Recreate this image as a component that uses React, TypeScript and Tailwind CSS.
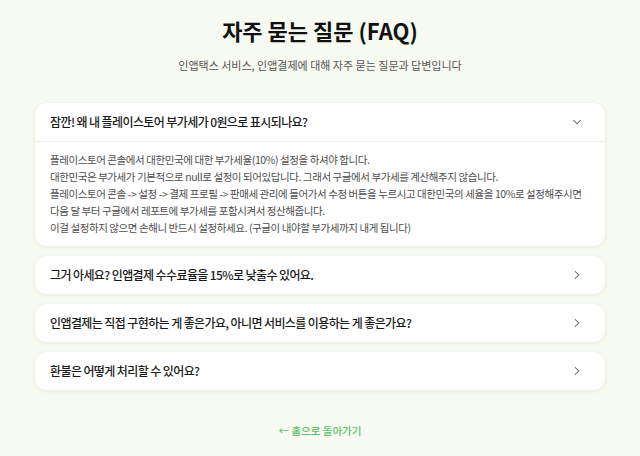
import { ChevronDown, ChevronRight } from 'lucide-react'

const faqs = [
  { q: '잠깐! 왜 내 플레이스토어 부가세가 0원으로 표시되나요?', open: true },
  { q: '그거 아세요? 인앱결제 수수료율을 15%로 낮출수 있어요.' },
  { q: '인앱결제는 직접 구현하는 게 좋은가요, 아니면 서비스를 이용하는 게 좋은가요?' },
  { q: '환불은 어떻게 처리할 수 있어요?' },
]

const answer = [
  '플레이스토어 콘솔에서 대한민국에 대한 부가세율(10%) 설정을 하셔야 합니다.',
  '대한민국은 부가세가 기본적으로 null로 설정이 되어있답니다. 그래서 구글에서 부가세를 계산해주지 않습니다.',
  '플레이스토어 콘솔 -> 설정 -> 결제 프로필 -> 판매세 관리에 들어가서 수정 버튼을 누르시고 대한민국의 세율을 10%로 설정해주시면',
  '다음 달 부터 구글에서 레포트에 부가세를 포함시켜서 정산해줍니다.',
  '이걸 설정하지 않으면 손해니 반드시 설정하세요. (구글이 내야할 부가세까지 내게 됩니다)',
]

export default function App() {
  return (
    <main
      className="min-h-screen bg-[#f7faf0] pt-[13px] pb-6"
      style={{ fontFamily: '"Noto Sans CJK KR", "Noto Sans", sans-serif' }}
    >
      <div className="w-[570px] mx-auto">
        <h1 className="text-center text-[22px] font-bold text-[#111] leading-[34px]">자주 묻는 질문 (FAQ)</h1>
        <p className="text-center text-[11px] text-[#555] mt-[9px] leading-[18px]">
          인앱택스 서비스, 인앱결제에 대해 자주 묻는 질문과 답변입니다
        </p>

        <div className="mt-[29px] flex flex-col gap-[10px]">
          {faqs.map(f => (
            <div key={f.q} className="bg-white rounded-xl shadow-[0_1px_4px_rgba(0,0,0,0.08)]">
              <div className="h-[38px] flex items-center justify-between pl-[15px] pr-[21px]">
                <span className="text-[12px] tracking-[-0.05em] font-medium text-[#1a1a1a]">{f.q}</span>
                {f.open ? (
                  <ChevronDown size={14} strokeWidth={1.8} className="text-[#5c616b]" />
                ) : (
                  <ChevronRight size={14} strokeWidth={1.8} className="text-[#5c616b]" />
                )}
              </div>
              {f.open && (
                <div className="border-t border-[#f0f0f0] px-[15px] pt-[9px] pb-[10px]">
                  {answer.map(line => (
                    <p key={line} className="text-[10.5px] tracking-[-0.04em] leading-[17px] text-[#4d4d4d] whitespace-nowrap">{line}</p>
                  ))}
                </div>
              )}
            </div>
          ))}
        </div>

        <div className="mt-[26px] text-center">
          <a className="text-[10.5px] text-[#5cbf73] font-medium">← 홈으로 돌아가기</a>
        </div>
      </div>
    </main>
  )
}
